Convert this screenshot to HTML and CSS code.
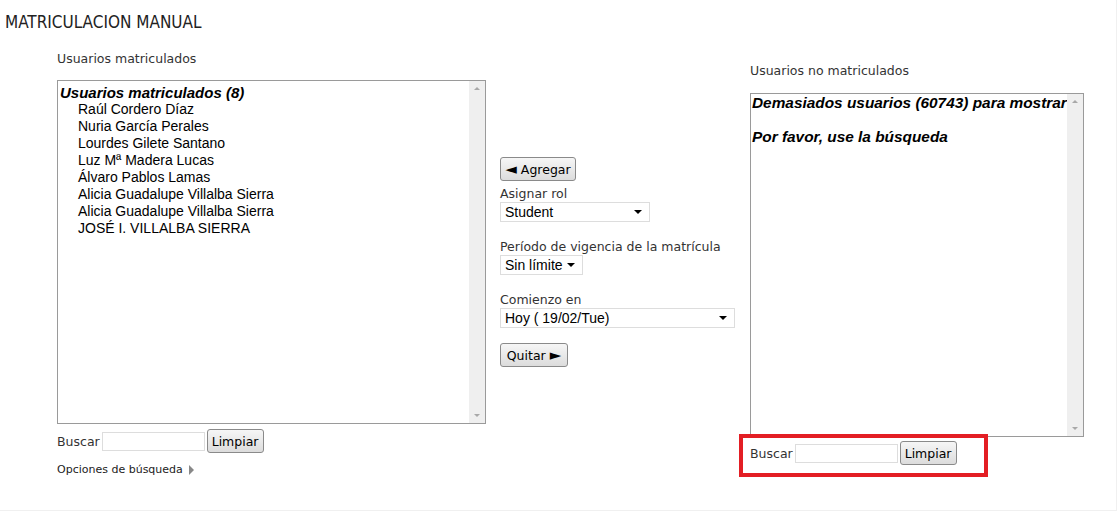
FILE: index.html
```html
<!DOCTYPE html>
<html lang="es">
<head>
    <meta charset="UTF-8">
    <title>Matriculación manual</title>
    <link rel="stylesheet" href="styles.css">
</head>
<body>
<div class="page">
    <h2 class="page-title">MATRICULACION MANUAL</h2>

    <div class="columns">
        <!-- enrolled users -->
        <div class="col col-left">
            <label class="col-label">Usuarios matriculados</label>
            <div class="listbox listbox-left">
                <div class="listbox-body">
                    <div class="group">Usuarios matriculados (8)</div>
                    <div class="option">Raúl Cordero Díaz</div>
                    <div class="option">Nuria García Perales</div>
                    <div class="option">Lourdes Gilete Santano</div>
                    <div class="option">Luz Mª Madera Lucas</div>
                    <div class="option">Álvaro Pablos Lamas</div>
                    <div class="option">Alicia Guadalupe Villalba Sierra</div>
                    <div class="option">Alicia Guadalupe Villalba Sierra</div>
                    <div class="option">JOSÉ I. VILLALBA SIERRA</div>
                </div>
                <div class="scrollbar">
                    <span class="arrow arrow-up"></span>
                    <span class="arrow arrow-down"></span>
                </div>
            </div>
            <div class="search-row">
                <span>Buscar</span>
                <input type="text" class="search-input">
                <button class="btn">Limpiar</button>
            </div>
            <div class="search-options">Opciones de búsqueda <span class="tri"></span></div>
        </div>

        <!-- actions -->
        <div class="col col-mid">
            <button class="btn btn-add"><span class="glyph">&#9668;</span> Agregar</button>
            <div class="field">
                <label>Asignar rol</label>
                <select class="select sel-role"><option>Student</option></select>
            </div>
            <div class="field">
                <label>Período de vigencia de la matrícula</label>
                <select class="select sel-period"><option>Sin límite</option></select>
            </div>
            <div class="field">
                <label>Comienzo en</label>
                <select class="select sel-start"><option>Hoy ( 19/02/Tue)</option></select>
            </div>
            <button class="btn btn-remove">Quitar <span class="glyph">&#9658;</span></button>
        </div>

        <!-- not enrolled users -->
        <div class="col col-right">
            <label class="col-label">Usuarios no matriculados</label>
            <div class="listbox listbox-right">
                <div class="listbox-body">
                    <div class="group nowrap">Demasiados usuarios (60743) para mostrar</div>
                    <div class="group">&nbsp;</div>
                    <div class="group">Por favor, use la búsqueda</div>
                </div>
                <div class="scrollbar">
                    <span class="arrow arrow-up"></span>
                    <span class="arrow arrow-down"></span>
                </div>
            </div>
            <div class="highlight">
                <div class="search-row">
                    <span>Buscar</span>
                    <input type="text" class="search-input">
                    <button class="btn">Limpiar</button>
                </div>
            </div>
        </div>
    </div>
</div>
</body>
</html>
```

FILE: styles.css
```css
body {
    margin: 0;
    background: #fff;
    font-family: 'DejaVu Sans', Verdana, sans-serif;
    font-size: 12.5px;
    color: #333;
}

.page {
    height: 510px;
    width: 1116px;
    border-right: 1px solid #f0f0f0;
    border-bottom: 1px solid #f0f0f0;
    overflow: hidden;
}

.page-title {
    margin: 0;
    padding: 11px 0 0 5px;
    font-family: 'DejaVu Sans Condensed', 'DejaVu Sans', sans-serif;
    font-stretch: condensed;
    font-size: 17px;
    font-weight: normal;
    line-height: 22px;
    color: #222;
}

.columns {
    display: flex;
    align-items: flex-start;
}

.col-label {
    display: block;
    line-height: 16px;
}

.col-left {
    margin-left: 57px;
    width: 429px;
    padding-top: 18px;
}

.col-left .col-label {
    margin-bottom: 13px;
}

.col-mid {
    margin-left: 14px;
    width: 236px;
    padding-top: 124px;
}

.col-right {
    margin-left: 14px;
    width: 334px;
    padding-top: 30px;
}

.col-right .col-label {
    margin-bottom: 14px;
}

/* list boxes */
.listbox {
    display: flex;
    border: 1px solid #9a9a9a;
    background: #fff;
    height: 342px;
    font-family: 'Liberation Sans', Arial, sans-serif;
    font-size: 14px;
    color: #000;
}

.listbox-body {
    flex: 1;
    overflow: hidden;
    padding: 3px 2px;
    line-height: 17px;
}

.group {
    font-weight: bold;
    font-style: italic;
    font-size: 15px;
}

.nowrap {
    white-space: nowrap;
}

.option {
    padding-left: 18px;
}

.listbox-right .listbox-body {
    padding: 0 1px;
}

.listbox-right .group {
    font-size: 15.4px;
}

.scrollbar {
    width: 16px;
    background: #efefef;
    display: flex;
    flex-direction: column;
    justify-content: space-between;
    align-items: center;
    padding: 6px 0;
}

.arrow {
    width: 0;
    height: 0;
    border-left: 3px solid transparent;
    border-right: 3px solid transparent;
}

.arrow-up {
    border-bottom: 3px solid #a8a8a8;
}

.arrow-down {
    border-top: 3px solid #a8a8a8;
}

/* search */
.search-row {
    display: flex;
    align-items: center;
    margin-top: 5px;
}

.search-row span {
    margin-right: 2px;
}

.search-input {
    width: 101px;
    height: 17px;
    border: 1px solid #ddd;
    padding: 0;
    margin: 0 2px 0 0;
}

.btn {
    font-family: 'DejaVu Sans', Verdana, sans-serif;
    font-size: 12.5px;
    color: #000;
    height: 24px;
    padding: 0 4px;
    border: 1px solid #8a8a8a;
    border-radius: 3px;
    background: linear-gradient(#f6f6f6, #dcdcdc);
}

.glyph {
    font-size: 15px;
    line-height: 1;
}

.search-options {
    margin-top: 10px;
    font-size: 11px;
    color: #222;
}

.tri {
    display: inline-block;
    width: 0;
    height: 0;
    border-top: 5px solid transparent;
    border-bottom: 5px solid transparent;
    border-left: 5px solid #888;
    vertical-align: -2px;
    margin-left: 3px;
}

.highlight {
    margin-left: -11px;
    margin-top: -3px;
    width: 234px;
    padding: 0 0 8px 7px;
    border: 4px solid #e31e24;
}

.highlight .search-row {
    margin-top: 3px;
}

/* middle form */
.btn-add {
    width: 76px;
    padding: 0 2px;
}

.btn-remove {
    width: 68px;
    margin-top: 15px;
    padding: 0 2px;
}

.field {
    margin-top: 5px;
}

.field + .field {
    margin-top: 17px;
}

.field label {
    display: block;
    line-height: 16px;
}

.select {
    appearance: none;
    -webkit-appearance: none;
    height: 20px;
    border: 1px solid #ddd;
    border-radius: 0;
    background: #fff url("data:image/svg+xml;utf8,<svg xmlns='http://www.w3.org/2000/svg' width='8' height='4'><path d='M0 0h8L4 4z' fill='%23000'/></svg>") no-repeat right 7px center;
    font-family: 'Liberation Sans', Arial, sans-serif;
    font-size: 14px;
    color: #000;
    padding: 0 0 0 4px;
    margin: 0;
    display: block;
}

.sel-role { width: 150px; }
.sel-period { width: 83px; }
.sel-start { width: 235px; }
```
